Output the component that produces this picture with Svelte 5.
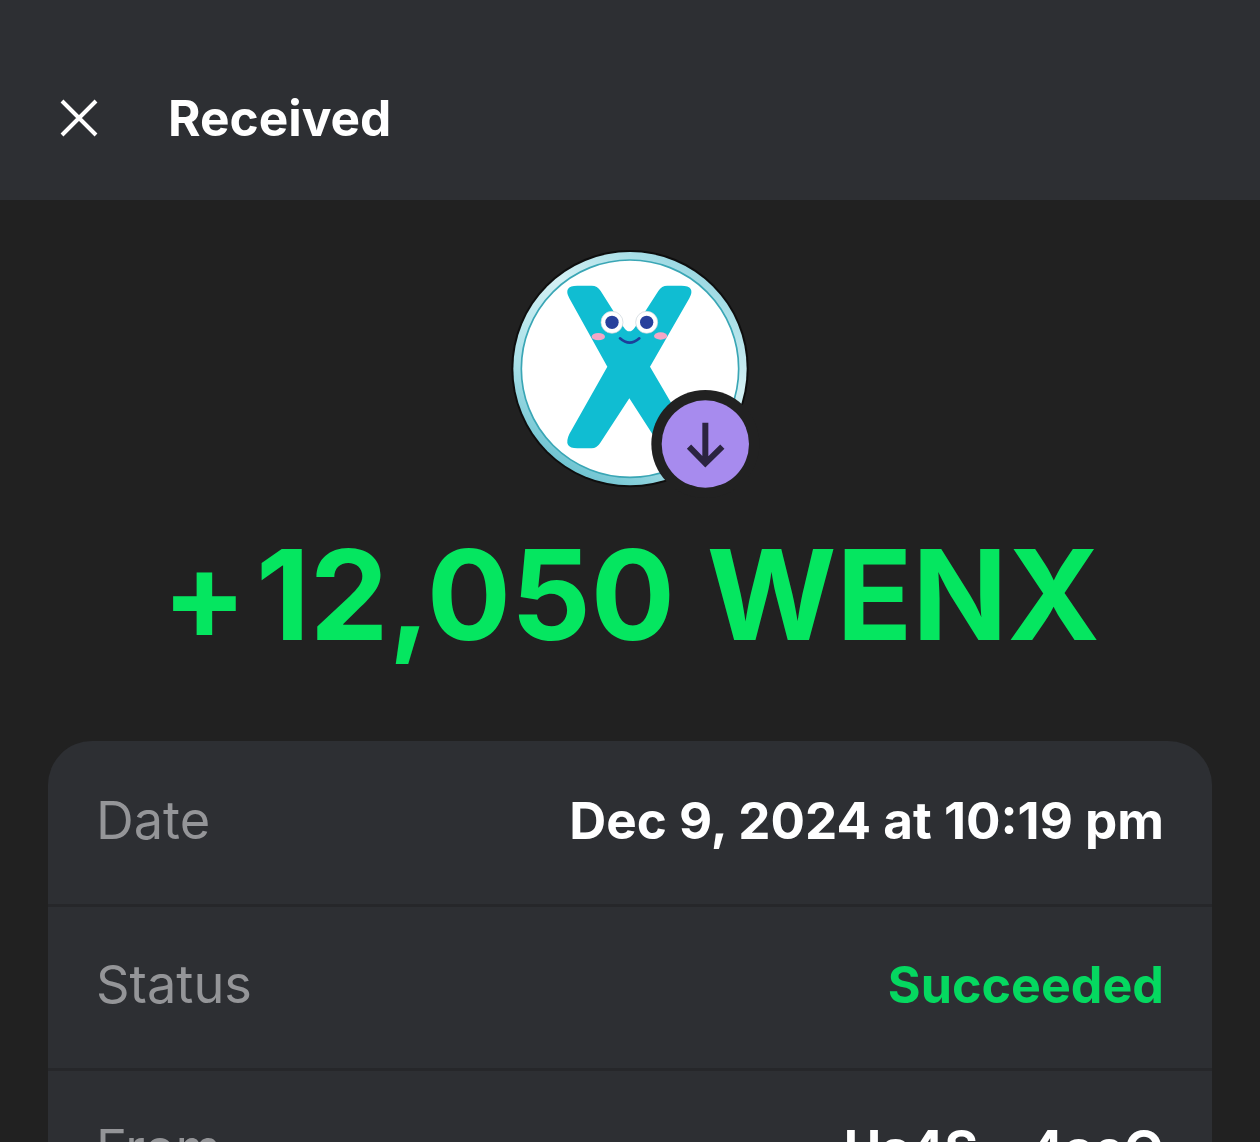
<script lang="ts">
    const rows = [
        { label: 'Date', value: 'Dec 9, 2024 at 10:19 pm' },
        { label: 'Status', value: 'Succeeded', ok: true },
        { label: 'From', value: 'Us4S…4aeQ' }
    ];
</script>

<div class="page">
    <header class="bar">
        <svg class="close" width="38" height="38" viewBox="0 0 38 38" aria-hidden="true">
            <path d="M2 2 L36 36 M36 2 L2 36" stroke="#fff" stroke-width="4" fill="none" />
        </svg>
        <h1>Received</h1>
    </header>

    <main class="content">
        <svg class="token" width="280" height="280" viewBox="0 0 840 840" aria-hidden="true">
            <defs>
                <linearGradient id="ring" x1="0.8" y1="0" x2="0.2" y2="1">
                    <stop offset="0" stop-color="#8fd3de" />
                    <stop offset="0.35" stop-color="#d3f0f4" />
                    <stop offset="0.7" stop-color="#a9e0e8" />
                    <stop offset="1" stop-color="#5fbccb" />
                </linearGradient>
            </defs>
            <circle cx="420" cy="416" r="356" fill="#0e0e0e" />
            <circle cx="420" cy="416" r="350" fill="url(#ring)" />
            <circle cx="420" cy="416" r="326" fill="#fff" stroke="#3aa6b5" stroke-width="5" />
            <path
                d="M262 167 H305 Q322 167 332 183 L400 290 Q418 318 436 290 L505 183 Q515 167 532 167 H574 Q618 167 598 205 L480 410 L598 612 Q618 655 575 655 H530 Q515 655 505 640 L418 505 L330 640 Q320 655 305 655 H262 Q218 655 238 612 L352 410 L238 205 Q218 167 262 167 Z"
                fill="#10bdd2"
            />
            <circle cx="366" cy="277" r="33" fill="#fff" stroke="#c9d3da" stroke-width="2" />
            <circle cx="470" cy="277" r="33" fill="#fff" stroke="#c9d3da" stroke-width="2" />
            <circle cx="366" cy="277" r="20" fill="#27409c" />
            <circle cx="470" cy="277" r="20" fill="#27409c" />
            <ellipse cx="325" cy="320" rx="20" ry="11" fill="#f4a6c6" />
            <ellipse cx="512" cy="318" rx="20" ry="11" fill="#f4a6c6" />
            <path d="M390 325 Q419 351 448 325" stroke="#1c3f9a" stroke-width="8" stroke-linecap="round" fill="none" />
            <circle cx="646" cy="642" r="162" fill="#212121" />
            <circle cx="646" cy="642" r="131" fill="#a78bee" />
            <path d="M646 578 V700 M597 650 L646 700 L697 650" stroke="#2b2440" stroke-width="18" fill="none" />
        </svg>

        <div class="amount"><span class="sign">+</span>12,050 WENX</div>

        <section class="card">
            {#each rows as row}
                <div class="row">
                    <span class="label">{row.label}</span>
                    <span class="value" class:ok={row.ok}>{row.value}</span>
                </div>
            {/each}
        </section>
    </main>
</div>

<style>
    :global(body) {
        background: #212121;
    }

    .page {
        height: 1142px;
        overflow: hidden;
        background: #212121;
        color: #fff;
        font-family: Inter, "Liberation Sans", sans-serif;
    }

    .bar {
        height: 200px;
        box-sizing: border-box;
        background: #2d2f33;
        display: flex;
        align-items: center;
        gap: 70px;
        padding: 36px 0 0 60px;
    }

    h1 {
        margin: 0;
        font-size: 49.6px;
        font-weight: 700;
    }

    .content {
        display: flex;
        flex-direction: column;
        align-items: center;
        padding: 30px 48px 0;
    }

    .token {
        display: block;
    }

    .amount {
        margin-top: 10px;
        padding-left: 2px;
        font-size: 125px;
        line-height: 150px;
        font-weight: 700;
        word-spacing: 2px;
        color: #05e660;
        white-space: nowrap;
    }

    .sign {
        margin-right: 9px;
    }

    .card {
        align-self: stretch;
        margin-top: 71px;
        padding-top: 2px;
        background: #2d2f33;
        border-radius: 44px 44px 0 0;
    }

    .row {
        height: 164px;
        box-sizing: border-box;
        padding: 0 48px 7px;
        display: flex;
        align-items: center;
        justify-content: space-between;
        font-size: 52.3px;
        border-bottom: 3px solid #26272a;
    }

    .label {
        color: #949598;
    }

    .value {
        font-size: 51.2px;
        font-weight: 650;
    }

    .ok {
        font-size: 50.2px;
        font-weight: 700;
        color: #05d860;
    }
</style>
